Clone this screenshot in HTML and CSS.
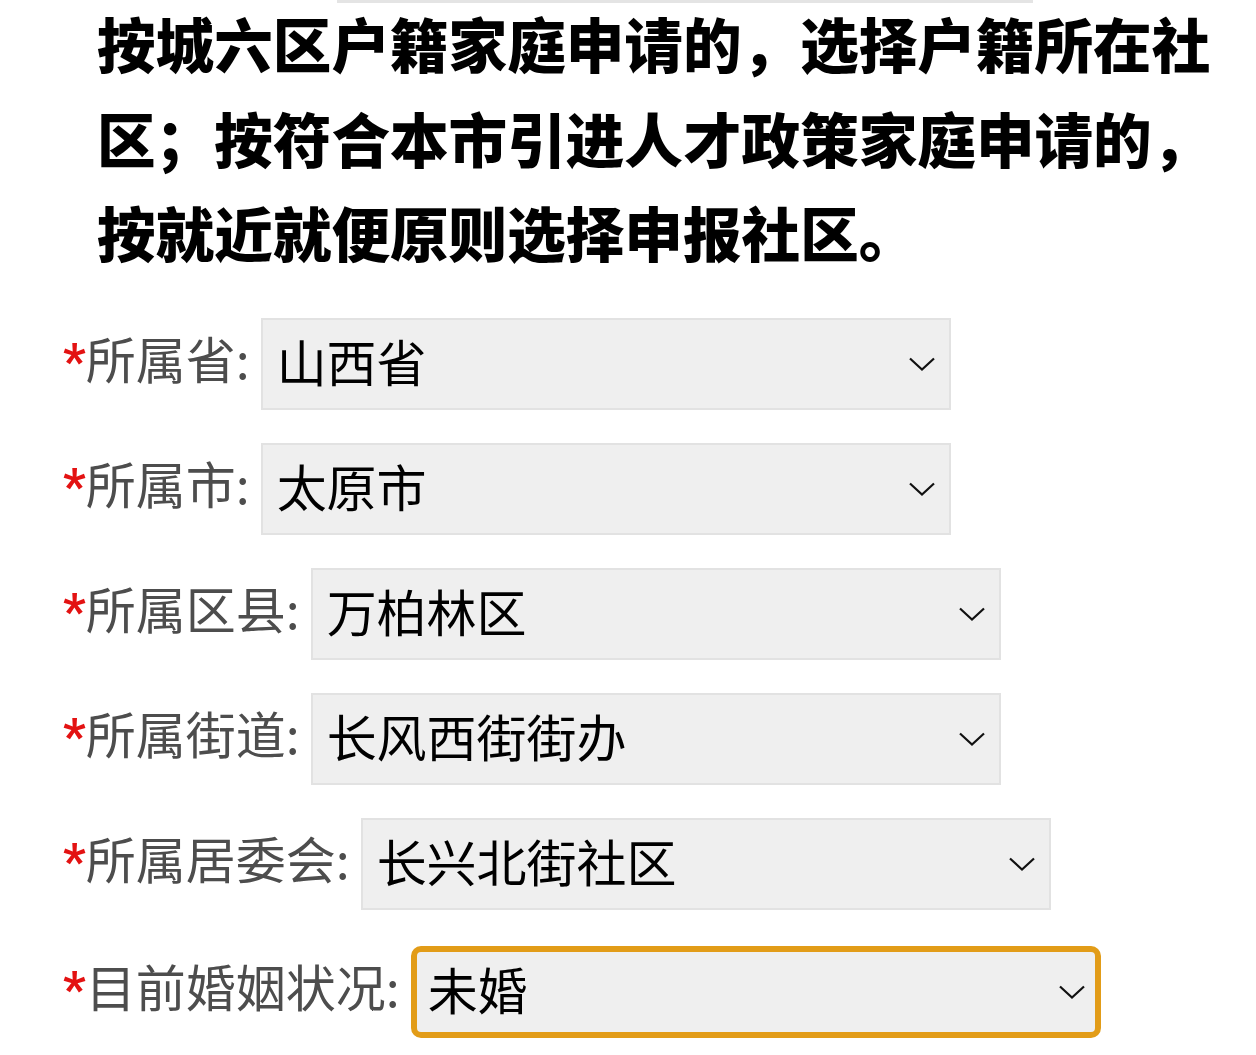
FILE: index.html
```html
<!DOCTYPE html>
<html lang="zh-CN">
<head>
<meta charset="utf-8">
<title>申报</title>
<link rel="stylesheet" href="styles.css">
</head>
<body>
<div class="topbar"></div>
<p class="notice">按城六区户籍家庭申请的，选择户籍所在社区；按符合本市引进人才政策家庭申请的，按就近就便原则选择申报社区。</p>
<form class="form">
  <div class="row">
    <label class="label"><span class="req">*</span>所属省:</label>
    <div class="select"><span class="value">山西省</span><svg class="chev" viewBox="0 0 26 14" width="26" height="14"><path d="M1 1.5 L13 12.5 L25 1.5" /></svg></div>
  </div>
  <div class="row">
    <label class="label"><span class="req">*</span>所属市:</label>
    <div class="select"><span class="value">太原市</span><svg class="chev" viewBox="0 0 26 14" width="26" height="14"><path d="M1 1.5 L13 12.5 L25 1.5" /></svg></div>
  </div>
  <div class="row">
    <label class="label"><span class="req">*</span>所属区县:</label>
    <div class="select"><span class="value">万柏林区</span><svg class="chev" viewBox="0 0 26 14" width="26" height="14"><path d="M1 1.5 L13 12.5 L25 1.5" /></svg></div>
  </div>
  <div class="row">
    <label class="label"><span class="req">*</span>所属街道:</label>
    <div class="select"><span class="value">长风西街街办</span><svg class="chev" viewBox="0 0 26 14" width="26" height="14"><path d="M1 1.5 L13 12.5 L25 1.5" /></svg></div>
  </div>
  <div class="row">
    <label class="label"><span class="req">*</span>所属居委会:</label>
    <div class="select"><span class="value">长兴北街社区</span><svg class="chev" viewBox="0 0 26 14" width="26" height="14"><path d="M1 1.5 L13 12.5 L25 1.5" /></svg></div>
  </div>
  <div class="row row-focus">
    <label class="label"><span class="req">*</span>目前婚姻状况:</label>
    <div class="select select-focus"><span class="value">未婚</span><svg class="chev" viewBox="0 0 26 14" width="26" height="14"><path d="M1 1.5 L13 12.5 L25 1.5" /></svg></div>
  </div>
</form>
</body>
</html>
```
FILE: styles.css
```css
html, body {
  margin: 0;
  padding: 0;
  background: #ffffff;
}
body {
  font-family: "Noto Sans CJK SC", "Noto Sans", sans-serif;
  width: 1256px;
  overflow: hidden;
}
.topbar {
  width: 696px;
  height: 3px;
  margin-left: 337px;
  background: #e4e4e4;
}
.notice {
  margin: -7px 0 0 0;
  padding: 0 20px 0 97px;
  font-size: 58.6px;
  font-weight: 900;
  line-height: 94.5px;
  color: #000;
}
.form {
  margin: 38px 0 0 0;
  padding-left: 63px;
  display: flex;
  flex-direction: column;
  gap: 33px;
}
.row {
  display: flex;
  align-items: center;
  height: 92px;
}
.row-focus {
  margin-top: 3px;
}
.label {
  font-size: 50px;
  color: #4d4d4d;
  white-space: nowrap;
  margin-right: 11px;
  line-height: 1;
  padding-bottom: 8px;
}
.req {
  color: #e31212;
  font-family: "Roboto", "Noto Sans", sans-serif;
  font-weight: 700;
  font-size: 50px;
}
.select {
  box-sizing: border-box;
  width: 690px;
  height: 92px;
  background: #efefef;
  border: 2px solid #e2e2e2;
  display: flex;
  align-items: center;
  padding: 0 14px 0 14px;
}
.select-focus {
  border: 6px solid #e29c18;
  border-radius: 10px;
  padding-left: 11px;
  padding-right: 10px;
}
.value {
  font-size: 50px;
  color: #000;
  line-height: 1;
  flex: 1;
  padding-bottom: 8px;
}
.chev {
  fill: none;
  stroke: #111;
  stroke-width: 2.2;
}
```
